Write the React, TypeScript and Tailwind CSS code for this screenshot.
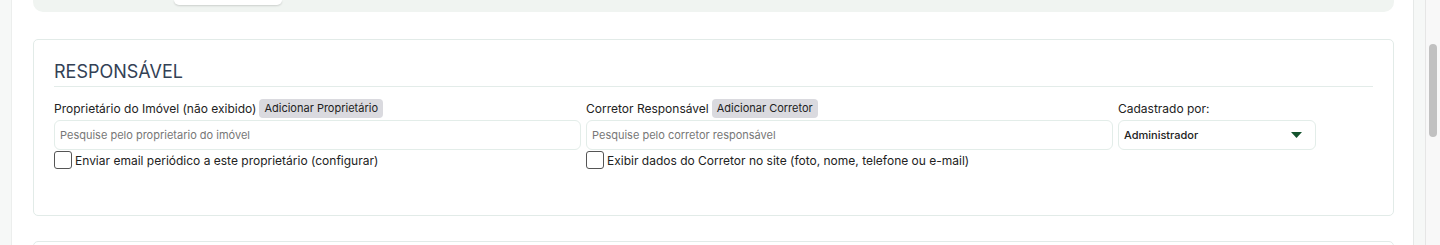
export default function App() {
  return (
    <div
      className="flex h-[245px] w-[1440px] overflow-hidden bg-[#f6f8f7] text-[#222]"
      style={{ fontFamily: 'Inter, "Noto Sans", sans-serif' }}
    >
      <div className="w-[12px] shrink-0 border-r border-[#eceeed]" />
      <main className="flex w-[1401px] shrink-0 flex-col bg-white pl-[21px] pr-[19px]">
        {/* top tabs bar */}
        <div className="flex h-[12px] shrink-0 items-start rounded-b-[10px] bg-[#f0f4f1] pl-[141px]">
          <div className="h-[5px] w-[108px] rounded-b-[6px] bg-white shadow-[0_1px_2px_rgba(0,0,0,0.15)]" />
        </div>

        <section className="mt-[27px] h-[177px] shrink-0 rounded-[5px] border border-[#e2ebe8] px-[20px] pt-[18px]">
          <h2 className="text-[18px] leading-[27px] text-[#334155]">RESPONSÁVEL</h2>
          <div className="mt-[1px] h-px w-full bg-[#e3ece9]" />

          <div className="mt-[11px] flex gap-[5px]">
            <div className="flex w-[527px] flex-col">
              <div className="flex h-[21px] items-center gap-[3px]">
                <span className="text-[12px]">Proprietário do Imóvel (não exibido)</span>
                <span className="rounded-[4px] bg-[#dadadf] px-[5px] py-[2px] text-[11px] leading-[15px]">Adicionar Proprietário</span>
              </div>
              <input
                className="mt-[1px] h-[30px] rounded-[6px] border border-[#e3ede9] px-[5px] text-[11px] outline-none placeholder:text-[#777]"
                placeholder="Pesquise pelo proprietario do imóvel"
              />
              <label className="mt-[1px] flex items-end">
                <span className="h-[18px] w-[18px] rounded-[3px] border border-[#555] bg-white" />
                <span className="ml-[3px] text-[12px] leading-[16px]">Enviar email periódico a este proprietário (configurar)</span>
              </label>
            </div>

            <div className="flex w-[527px] flex-col">
              <div className="flex h-[21px] items-center gap-[3px]">
                <span className="text-[12px]">Corretor Responsável</span>
                <span className="rounded-[4px] bg-[#dadadf] px-[5px] py-[2px] text-[11px] leading-[15px]">Adicionar Corretor</span>
              </div>
              <input
                className="mt-[1px] h-[30px] rounded-[6px] border border-[#e3ede9] px-[5px] text-[11px] outline-none placeholder:text-[#777]"
                placeholder="Pesquise pelo corretor responsável"
              />
              <label className="mt-[1px] flex items-end">
                <span className="h-[18px] w-[18px] rounded-[3px] border border-[#555] bg-white" />
                <span className="ml-[3px] text-[12px] leading-[16px]">Exibir dados do Corretor no site (foto, nome, telefone ou e-mail)</span>
              </label>
            </div>

            <div className="flex w-[198px] flex-col">
              <div className="flex h-[21px] items-center">
                <span className="text-[12px]">Cadastrado por:</span>
              </div>
              <div className="mt-[1px] flex h-[30px] items-center justify-between rounded-[6px] border border-[#e3ede9] pl-[5px] pr-[13px]">
                <span className="text-[11px] font-medium">Administrador</span>
                <svg width="11" height="6" viewBox="0 0 11 6">
                  <path d="M0 0h11L5.5 6z" fill="#14532d" />
                </svg>
              </div>
            </div>
          </div>
        </section>

        <section className="mt-[25px] h-[40px] shrink-0 rounded-[5px] border border-[#e2ebe8]" />
      </main>
      <div className="w-[12px] shrink-0 border-l border-[#e6e9e8]" />
      <div className="relative w-[15px] shrink-0 border-l border-[#e6e6e6] bg-[#f8f8f8]">
        <div className="absolute left-[3px] top-[44px] h-[93px] w-[8px] rounded-full bg-[#c1c1c1]" />
      </div>
    </div>
  );
}
